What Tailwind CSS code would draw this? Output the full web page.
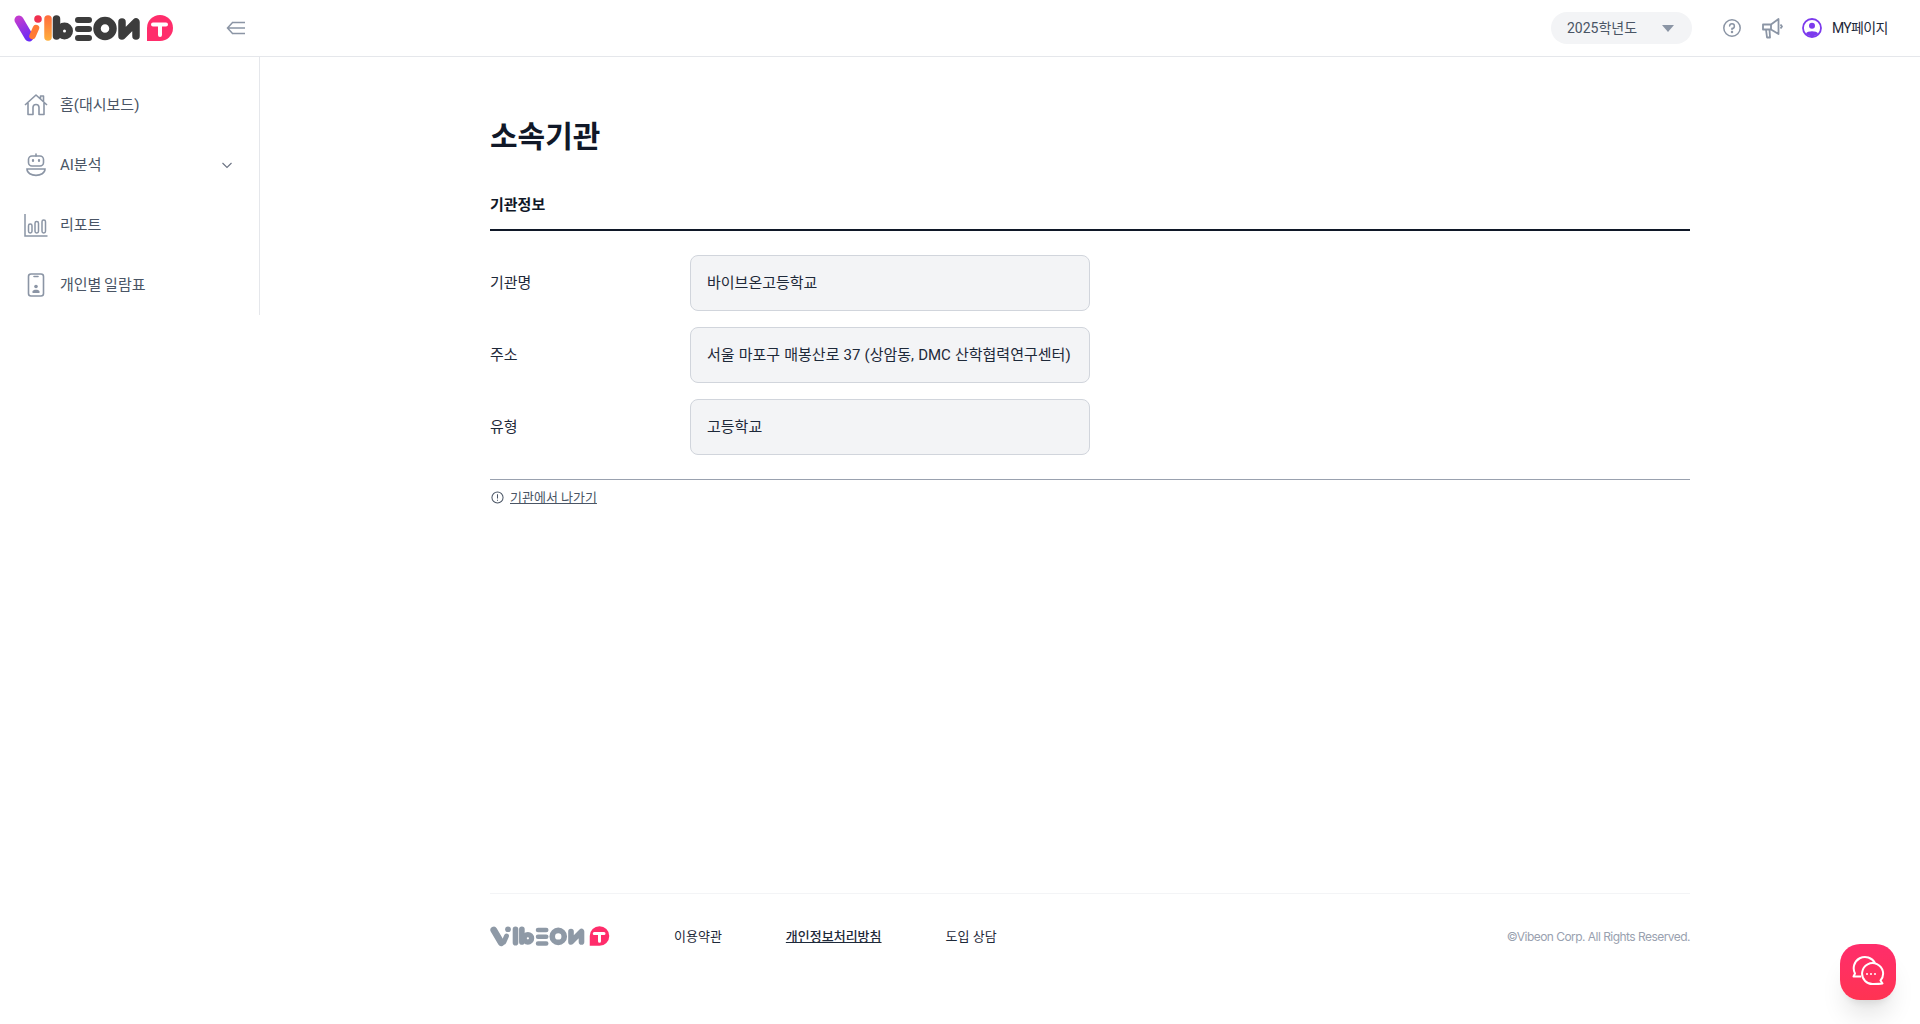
<!DOCTYPE html>
<html lang="ko">
<head>
  <meta charset="UTF-8">
  <title>소속기관</title>
  <script src="https://cdn.jsdelivr.net/npm/@tailwindcss/browser@4"></script>
</head>
<body class="h-screen overflow-hidden flex flex-col bg-white text-gray-800 font-['Roboto','Noto_Sans_CJK_KR',sans-serif]">

  <!-- header -->
  <header class="h-[57px] shrink-0 border-b border-gray-200 flex items-center pl-[14px] pr-[32px]">
    <svg class="w-[160px] h-[30px] shrink-0" viewBox="0 0 160 30" fill="none">
      <defs>
        <linearGradient id="lgV" gradientUnits="userSpaceOnUse" x1="4" y1="5" x2="15" y2="26"><stop offset="0" stop-color="#c13bd0"/><stop offset="1" stop-color="#6a2bf5"/></linearGradient>
        <linearGradient id="lgI" gradientUnits="userSpaceOnUse" x1="34" y1="2" x2="34" y2="28"><stop offset="0" stop-color="#ff6a3c"/><stop offset="1" stop-color="#ffb13d"/></linearGradient>
      </defs>
      <path d="M5 7 L15 24" stroke="url(#lgV)" stroke-width="9" stroke-linecap="round"/>
      <path d="M18.500 23 L22 15" stroke="#ff7a35" stroke-width="6.500" stroke-linecap="round"/>
      <circle cx="24" cy="6" r="3.800" fill="#f0304f"/>
      <path d="M34 6 V24" stroke="url(#lgI)" stroke-width="7.500" stroke-linecap="round"/>
      <g stroke="#3c3c3c" stroke-linecap="round">
        <path d="M42.500 6 V23" stroke-width="7.500"/>
        <circle cx="50.500" cy="18" r="5" stroke-width="7"/>
        <path d="M64 7 H75 M64 16 H75 M64 25 H75" stroke-width="6"/>
        <circle cx="91" cy="15.500" r="8" stroke-width="7.500"/>
        <path d="M108 9 V23 L122 9 V23" stroke-width="7.500" stroke-linejoin="round"/>
      </g>
      <path d="M133 28 V15 A13 13 0 1 1 146 28 Z" fill="#ff2d6b"/>
      <path d="M139 11.500 H152 M146 11.500 V22" stroke="#fff" stroke-width="4" stroke-linecap="round"/>
    </svg>
    <svg class="ml-[52px] w-[20px] h-[20px] text-[#8b95a5]" viewBox="0 0 20 20" fill="none" stroke="currentColor" stroke-width="1.500">
      <path d="M7 4 L1.500 10 L7 16 M2 10 H19 M7 4.500 H19 M7 15.500 H19"/>
    </svg>

    <div class="ml-auto w-[141px] h-[32px] rounded-full bg-gray-100 flex items-center pl-[16px] pr-[18px] text-[14px] text-gray-600">
      2025학년도
      <span class="ml-auto w-0 h-0 border-x-[6px] border-x-transparent border-t-[7px] border-t-[#8b95a5]"></span>
    </div>
    <svg class="ml-[31px] w-[18px] h-[18px] text-[#8b95a5]" viewBox="0 0 18 18" fill="none" stroke="currentColor" stroke-width="1.500" stroke-linecap="round">
      <circle cx="9" cy="9" r="8.200"/>
      <path d="M6.600 7 A2.400 2.400 0 1 1 9 9.500 V10.500"/>
      <circle cx="9" cy="13" r=".5" fill="currentColor"/>
    </svg>
    <svg class="ml-[20px] w-[22px] h-[22px] text-[#8b95a5]" viewBox="0 0 22 22" fill="none" stroke="currentColor" stroke-width="1.800" stroke-linejoin="round">
      <path d="M2 7.500 H10 L17.500 2 V17 L10 12.500 H2 Z"/>
      <path d="M10 7.500 V12.500 M5 12.500 L6 20.500 H9 L8.500 12.500 M19.500 7.500 L21 9.500 L19.500 11.500"/>
    </svg>
    <svg class="ml-[19px] w-[20px] h-[20px]" viewBox="0 0 20 20" fill="none">
      <circle cx="10" cy="10" r="9" stroke="#7c3aed" stroke-width="1.800"/>
      <circle cx="10" cy="7.800" r="3" fill="#7c3aed"/>
      <path d="M4 15.500 C5 12.500 15 12.500 16 15.500 C14 19 6 19 4 15.500 Z" fill="#7c3aed"/>
    </svg>
    <span class="ml-[10px] w-[56px] whitespace-nowrap text-[14px] tracking-[-0.05em] text-gray-800">MY페이지</span>
  </header>

  <div class="flex-1 flex min-h-0">
    <!-- sidebar -->
    <aside class="w-[260px] h-[258px] shrink-0 border-r border-gray-200 pt-[18px] text-[15px] text-gray-600">
      <a class="h-[60px] flex items-center gap-[12px] pl-[24px]">
        <svg class="w-[24px] h-[24px] text-[#8b95a5]" viewBox="0 0 24 24" fill="none" stroke="currentColor" stroke-width="1.600" stroke-linejoin="round">
          <path d="M1 12 L12 2 L23 12 M4 10 V21.500 H9 V14.500 A3 3 0 0 1 15 14.500 V21.500 H20 V10 M16.500 6 V3 H19.500 V8.700"/>
        </svg>
        홈(대시보드)
      </a>
      <a class="h-[60px] flex items-center gap-[12px] pl-[24px] pr-[26px]">
        <svg class="w-[24px] h-[24px] text-[#8b95a5]" viewBox="0 0 24 24" fill="none" stroke="currentColor" stroke-width="1.600" stroke-linecap="round">
          <path d="M12 1 V3"/>
          <rect x="4.500" y="3" width="15" height="10" rx="3.500"/>
          <path d="M3 16 H21 C21 24.500 3 24.500 3 16 Z"/>
          <path d="M9 7 V8 M15 7 V8" stroke-width="2.200"/>
        </svg>
        AI분석
        <svg class="ml-auto w-[12px] h-[12px] text-gray-500" viewBox="0 0 12 12" fill="none" stroke="currentColor" stroke-width="1.100"><path d="M1.500 4 L6 8.500 L10.500 4"/></svg>
      </a>
      <a class="h-[60px] flex items-center gap-[12px] pl-[24px]">
        <svg class="w-[24px] h-[24px] text-[#8b95a5]" viewBox="0 0 24 24" fill="none" stroke="currentColor" stroke-width="1.500">
          <path d="M1 1 V23 H23.500"/>
          <rect x="4.500" y="11" width="3.500" height="9" rx="1.700"/>
          <rect x="11" y="8.500" width="3.500" height="11.500" rx="1.700"/>
          <rect x="18" y="7" width="3.500" height="13" rx="1.700"/>
        </svg>
        리포트
      </a>
      <a class="h-[60px] flex items-center gap-[12px] pl-[24px] [word-spacing:-1px]">
        <svg class="w-[24px] h-[24px] text-[#8b95a5]" viewBox="0 0 24 24" fill="none" stroke="currentColor" stroke-width="1.600">
          <rect x="4.500" y="1" width="15" height="22" rx="2.500"/>
          <path d="M10 3.500 H14" stroke-linecap="round"/>
          <circle cx="12" cy="13.500" r="1.800" fill="currentColor" stroke="none"/>
          <path d="M8.500 20 V18.500 C8.500 16 15.500 16 15.500 18.500 V20 Z" fill="currentColor" stroke="none"/>
        </svg>
        개인별 일람표
      </a>
    </aside>

    <!-- content -->
    <main class="flex-1 flex flex-col items-center">
      <div class="w-[1200px] flex-1 flex flex-col">
        <h1 class="mt-[58px] text-[30px] leading-[44px] font-bold text-gray-900">소속기관</h1>
        <h2 class="mt-[35px] pb-[13px] text-[15px] leading-[22px] font-bold text-gray-900 border-b-2 border-gray-900">기관정보</h2>

        <dl class="mt-[24px] flex flex-col gap-[16px] text-[15px]">
          <div class="flex items-center">
            <dt class="w-[200px]">기관명</dt>
            <dd class="w-[400px] h-[56px] rounded-lg border border-gray-300 bg-gray-100 flex items-center px-[16px]">바이브온고등학교</dd>
          </div>
          <div class="flex items-center">
            <dt class="w-[200px]">주소</dt>
            <dd class="w-[400px] h-[56px] rounded-lg border border-gray-300 bg-gray-100 flex items-center px-[16px] whitespace-nowrap [word-spacing:.4px]">서울 마포구 매봉산로 37 (상암동, DMC 산학협력연구센터)</dd>
          </div>
          <div class="flex items-center">
            <dt class="w-[200px]">유형</dt>
            <dd class="w-[400px] h-[56px] rounded-lg border border-gray-300 bg-gray-100 flex items-center px-[16px]">고등학교</dd>
          </div>
        </dl>

        <div class="mt-[24px] border-t border-gray-400 pt-[8px] flex items-center gap-[6px] pl-[1px] text-[13px] text-gray-600">
          <svg class="w-[13px] h-[13px]" viewBox="0 0 14 14" fill="none" stroke="currentColor" stroke-width="1.100">
            <circle cx="7" cy="7" r="6"/>
            <path d="M7 3.500 V8 M7 9.500 V10.500"/>
          </svg>
          <a class="underline">기관에서 나가기</a>
        </div>

        <footer class="mt-auto mb-[73px] h-[58px] border-t border-gray-100 flex items-end text-[13px] text-gray-800">
          <div class="h-[28px] flex items-center gap-[64px] w-full">
            <svg class="w-[120px] h-[24px] shrink-0 -mt-[2px]" viewBox="0 0 160 30" fill="none" stroke="#8e99a6" stroke-linecap="round">
              <path d="M5 7 L15 24" stroke-width="9"/>
              <path d="M18.500 23 L22 15" stroke-width="6.500"/>
              <circle cx="24" cy="6" r="3.800" fill="#8e99a6" stroke="none"/>
              <path d="M34 6 V24 M42.500 6 V23" stroke-width="7.500"/>
              <circle cx="50.500" cy="18" r="5" stroke-width="7"/>
              <path d="M64 7 H75 M64 16 H75 M64 25 H75" stroke-width="6"/>
              <circle cx="91" cy="15.500" r="8" stroke-width="7.500"/>
              <path d="M108 9 V23 L122 9 V23" stroke-width="7.500" stroke-linejoin="round"/>
              <path d="M133 28 V15 A13 13 0 1 1 146 28 Z" fill="#ff2d6b" stroke="none"/>
              <path d="M139 11.500 H152 M146 11.500 V22" stroke="#fff" stroke-width="4"/>
            </svg>
            <a>이용약관</a>
            <a class="underline font-medium">개인정보처리방침</a>
            <a>도입 상담</a>
            <span class="ml-auto text-[12px] tracking-[-0.045em] text-gray-400 font-['Inter']">©Vibeon Corp. All Rights Reserved.</span>
          </div>
        </footer>
      </div>
    </main>
  </div>

  <!-- chat button -->
  <button class="fixed right-[24px] bottom-[24px] w-[56px] h-[56px] rounded-[20px] bg-gradient-to-b from-[#ff2d6b] to-[#ff3352] shadow-xl flex items-center justify-center">
    <svg class="w-[34px] h-[34px]" viewBox="0 0 34 34" fill="none" stroke="#fff" stroke-width="2" stroke-linejoin="round">
      <path d="M10 21.500 L2.500 21.500 L4 18.500 A11 11 0 1 1 24 8"/>
      <path d="M31.500 28.500 L29.500 25.500 A10.500 10.500 0 1 0 23 29 C26 29 28 29 31.500 28.500 Z"/>
      <circle cx="16" cy="19" r="1" fill="#fff" stroke="none"/>
      <circle cx="20" cy="19" r="1" fill="#fff" stroke="none"/>
      <circle cx="24" cy="19" r="1" fill="#fff" stroke="none"/>
    </svg>
  </button>
</body>
</html>
